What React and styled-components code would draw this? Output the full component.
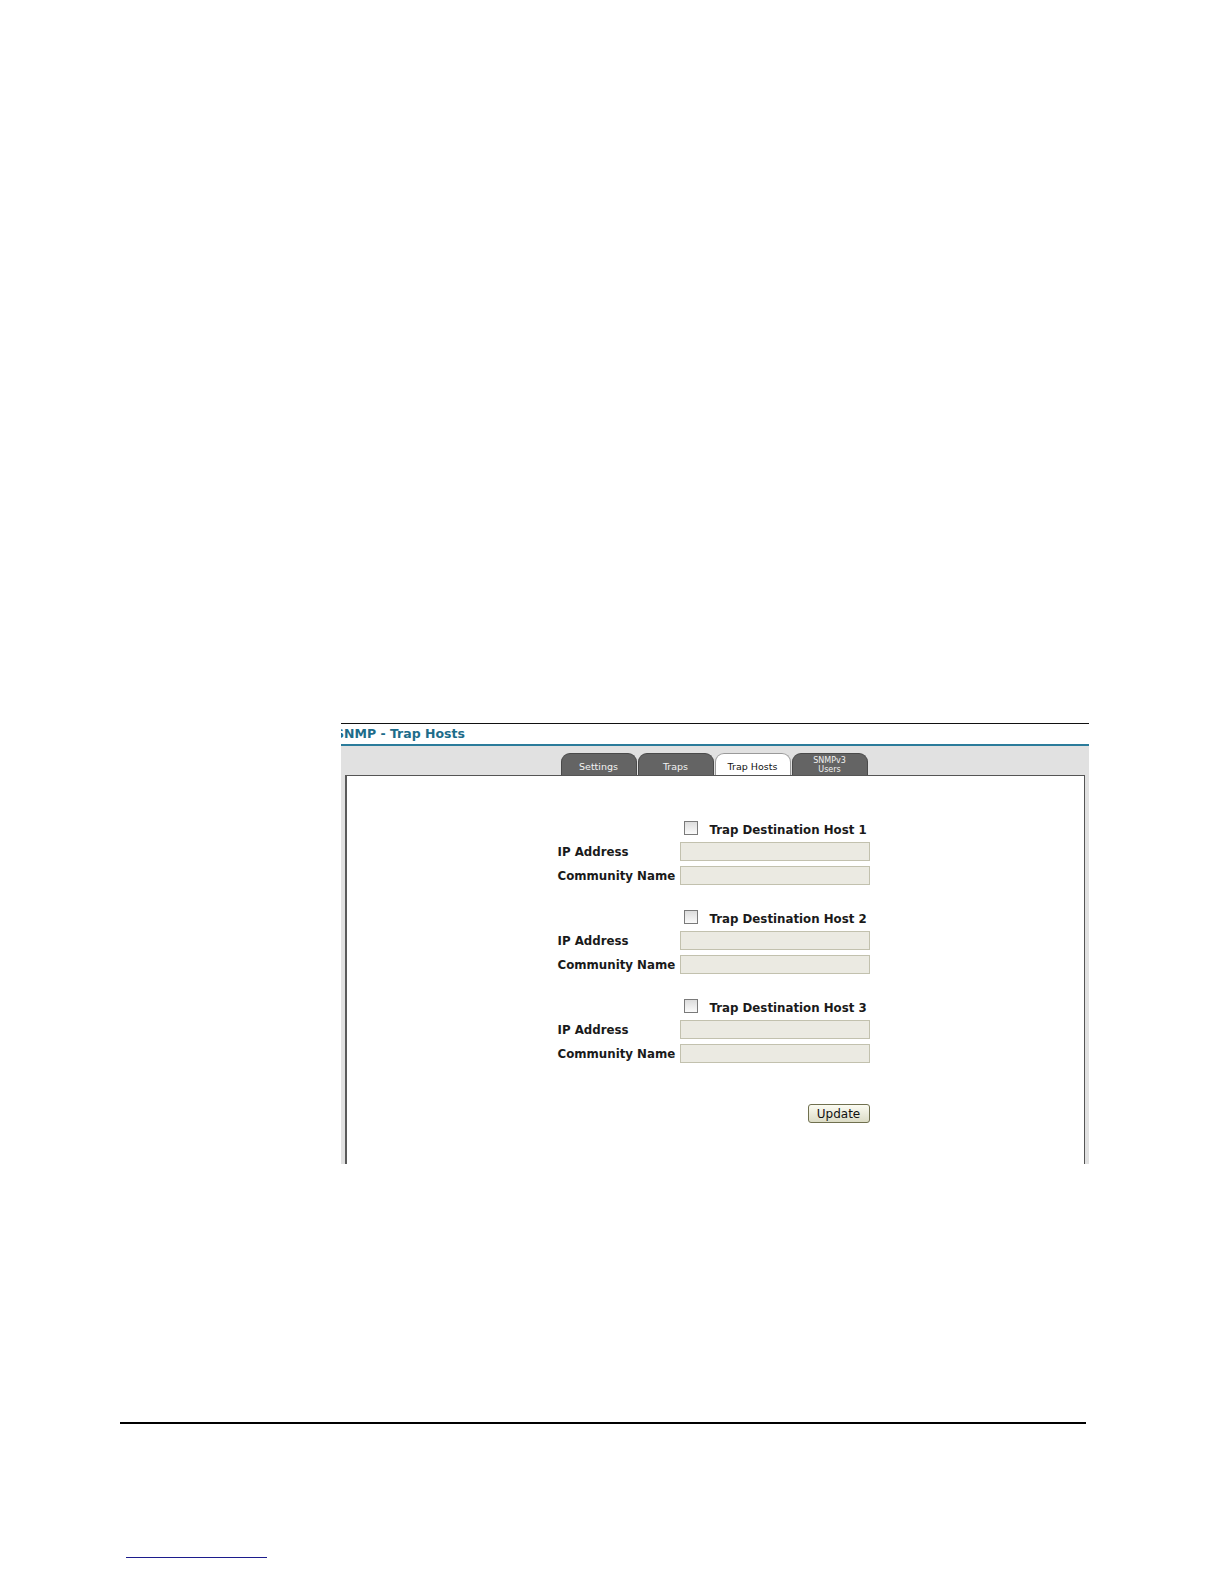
import React from "react";
import styled, { createGlobalStyle } from "styled-components";

const Global = createGlobalStyle`
  html, body { margin: 0; padding: 0; background: #fff; }
  body { font-family: "DejaVu Sans", Verdana, sans-serif; }
`;

const Page = styled.div`
  width: 1224px;
  height: 1584px;
  padding-top: 723px;
  box-sizing: border-box;
  display: flex;
  flex-direction: column;
`;

const Shot = styled.div`
  margin-left: 341px;
  width: 748px;
  display: flex;
  flex-direction: column;
`;

const TitleBar = styled.div`
  border-top: 1px solid #111;
  height: 20px;
  overflow: hidden;
  border-bottom: 2px solid #2b7c9b;
  box-shadow: 0 1px 0 #9cc8d8;
`;

const Title = styled.h1`
  margin: 2px 0 0 -6px;
  font-size: 12.5px;
  font-weight: bold;
  color: #1d6c8a;
  white-space: nowrap;
`;

const Stage = styled.div`
  background: #e1e1e1;
  height: 418px;
  box-sizing: border-box;
  padding: 7px 4px 0 4px;
  display: flex;
  flex-direction: column;
`;

const Tabs = styled.div`
  display: flex;
  justify-content: center;
  gap: 1px;
  height: 22px;
  margin-left: -2px;
`;

const Tab = styled.div`
  width: 76px;
  box-sizing: border-box;
  border-radius: 9px 9px 0 0;
  border: 1px solid ${(p) => (p.$active ? "#9a9a9a" : "#4a4a4a")};
  border-bottom: none;
  background: ${(p) => (p.$active ? "#fff" : "#646464")};
  color: ${(p) => (p.$active ? "#111" : "#f2f2f2")};
  font-size: ${(p) => (p.$small ? "8px" : "9.5px")};
  line-height: ${(p) => (p.$small ? "9px" : "11px")};
  display: flex;
  align-items: center;
  justify-content: center;
  text-align: center;
  padding-top: ${(p) => (p.$small ? "0" : "3px")};
`;

const Panel = styled.div`
  flex: 1;
  background: #fff;
  border: 1px solid #555;
  border-left: 2px solid #5a5a5a;
  border-bottom: none;
  display: flex;
  flex-direction: column;
  align-items: center;
  padding-top: 43px;
`;

const Form = styled.div`
  width: 312px;
  display: flex;
  flex-direction: column;
  gap: 23px;
  margin-left: -4px;
`;

const Group = styled.div`
  display: grid;
  grid-template-columns: 122px 190px;
  row-gap: 5px;
  align-items: center;
`;

const Head = styled.div`
  grid-column: 2;
  display: flex;
  align-items: flex-end;
  height: 18px;
  padding-left: 4px;
  gap: 12px;
`;

const Check = styled.span`
  align-self: flex-start;
  width: 12px;
  height: 12px;
  margin-top: 2px;
  border: 1px solid #7a7a7a;
  background: linear-gradient(#dcdcdc, #fafafa);
`;

const HeadText = styled.span`
  font-size: 11.8px;
  line-height: 14px;
  font-weight: bold;
  color: #1a1a1a;
  white-space: nowrap;
`;

const Label = styled.span`
  font-size: 11.8px;
  font-weight: bold;
  color: #1a1a1a;
  white-space: nowrap;
`;

const Field = styled.div`
  height: 19px;
  box-sizing: border-box;
  background: #ebeae2;
  border: 1px solid #c2c1ae;
`;

const Actions = styled.div`
  display: flex;
  justify-content: flex-end;
  margin-top: 18px;
`;

const Button = styled.div`
  width: 62px;
  height: 19px;
  box-sizing: border-box;
  border: 1px solid #70704f;
  border-radius: 3px;
  background: linear-gradient(#fbfbf2, #dcdcc6);
  font-size: 12px;
  color: #111;
  display: flex;
  align-items: center;
  justify-content: center;
`;

const Rule = styled.div`
  margin: 258px 0 0 120px;
  width: 966px;
  height: 2px;
  background: #000;
`;

const LinkLine = styled.div`
  margin: 133px 0 0 126px;
  width: 141px;
  height: 1px;
  background: #1c1c8c;
`;

const hosts = [1, 2, 3];

export default function App() {
  return (
    <Page>
      <Global />
      <Shot>
        <TitleBar>
          <Title>SNMP - Trap Hosts</Title>
        </TitleBar>
        <Stage>
          <Tabs>
            <Tab>Settings</Tab>
            <Tab>Traps</Tab>
            <Tab $active>Trap Hosts</Tab>
            <Tab $small>
              SNMPv3
              <br />
              Users
            </Tab>
          </Tabs>
          <Panel>
            <Form>
              {hosts.map((n) => (
                <Group key={n}>
                  <Head>
                    <Check />
                    <HeadText>Trap Destination Host {n}</HeadText>
                  </Head>
                  <Label>IP Address</Label>
                  <Field />
                  <Label>Community Name</Label>
                  <Field />
                </Group>
              ))}
              <Actions>
                <Button>Update</Button>
              </Actions>
            </Form>
          </Panel>
        </Stage>
      </Shot>
      <Rule />
      <LinkLine />
    </Page>
  );
}
